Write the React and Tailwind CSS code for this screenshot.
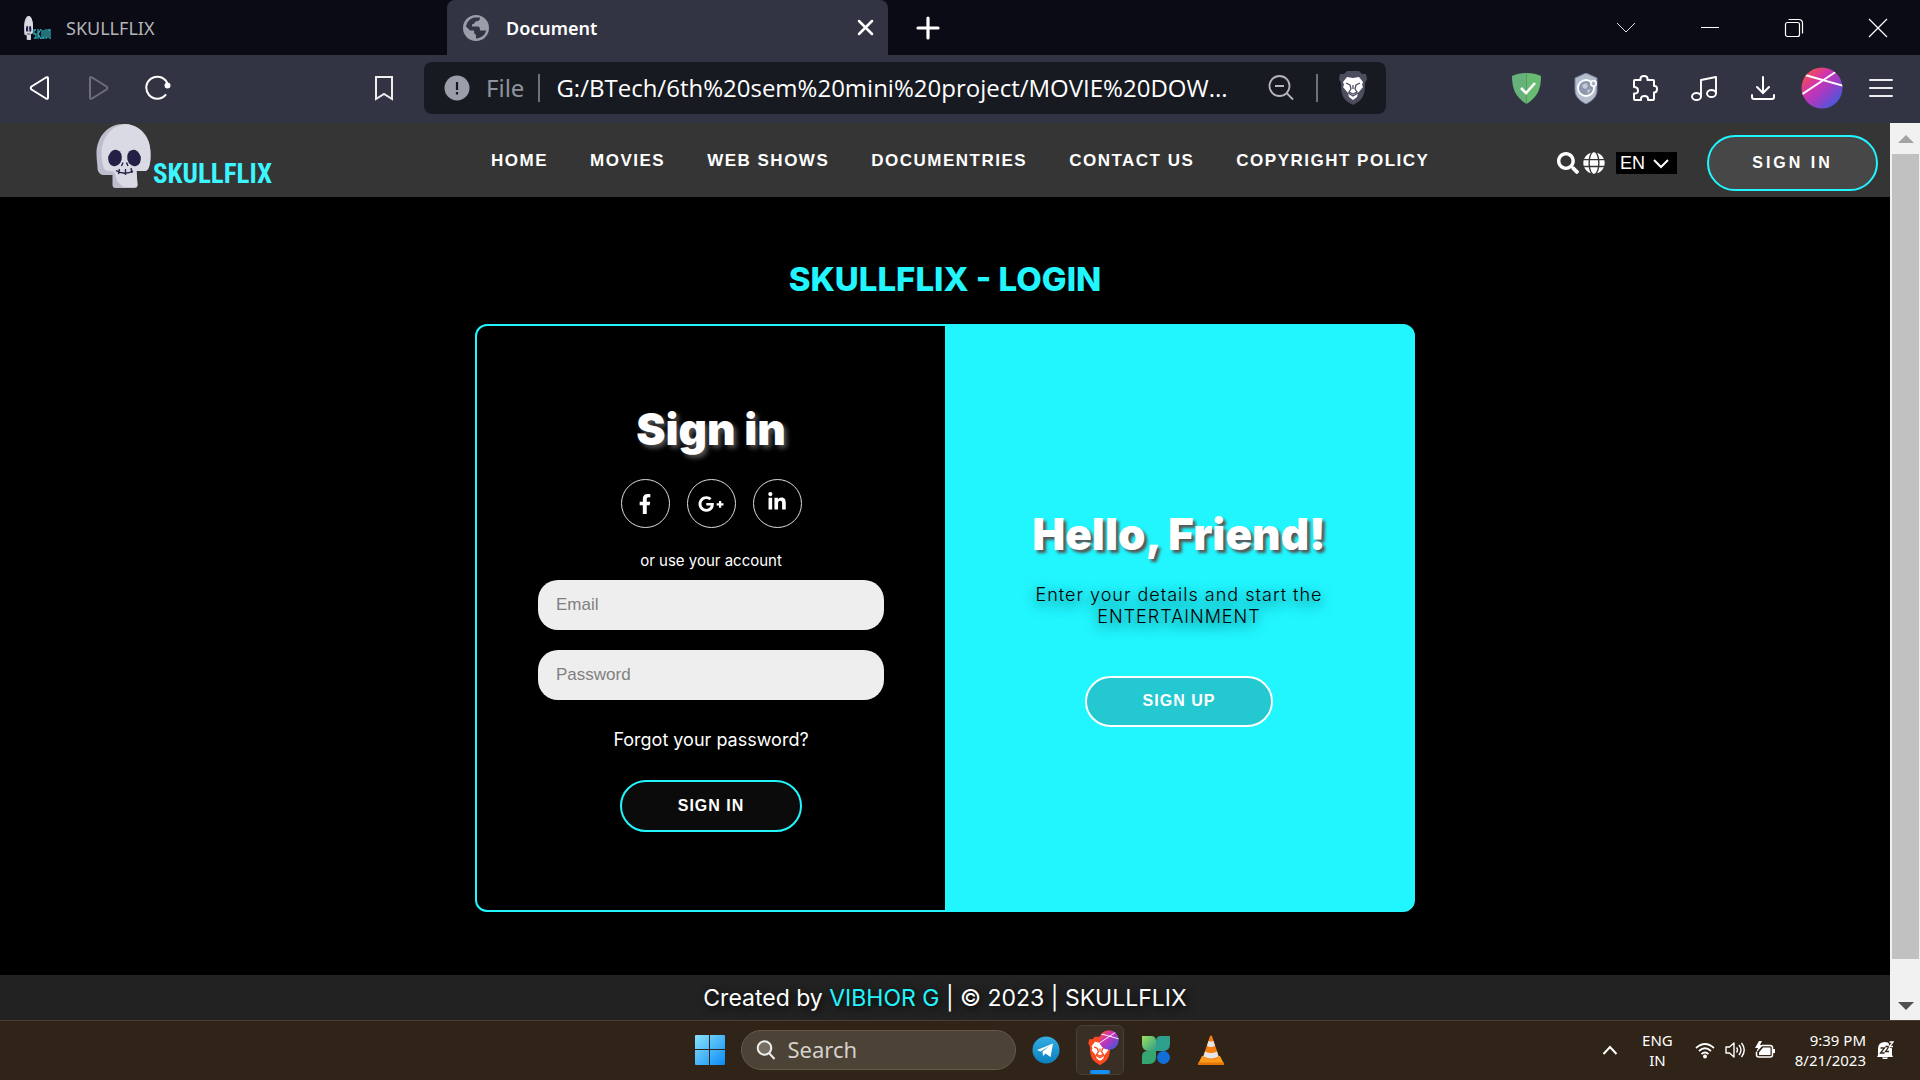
import React from "react";
import { FaSearch, FaGlobe, FaFacebookF, FaGooglePlusG, FaLinkedinIn } from "react-icons/fa";

const ui = "font-['Noto_Sans',sans-serif]";
const arial = "font-['Liberation_Sans',Arial,sans-serif]";

function Skull({ className, stretch }) {
  return (
    <svg className={className} viewBox="0 0 54 64" preserveAspectRatio={stretch ? "none" : undefined} aria-hidden="true">
      <path d="M27 0C11 0 0 13 0 30c0 6 1 10 1 15 1 4 3 6 7 6h8v10c0 2 1 3 3 3h19c2 0 3-1 3-3l-1-14h7c4 0 5-2 6-6 1-4 1-7 1-12C54 12 43 0 27 0Z" fill="#bdbdcd" />
      <path d="M29 0C14 2 5 14 5 30c0 6 1 9 2 13 1 3 3 4 6 4 3 0 5 1 6 4 1 6 4 9 8 12h11c2 0 3-1 3-2l-1-14h7c4 0 5-2 6-6 1-4 1-7 1-12C54 13 44 1 29 0Z" fill="#dadae4" />
      <ellipse cx="18.500" cy="34" rx="6.800" ry="8.300" transform="rotate(14 18.500 34)" fill="#232045" />
      <ellipse cx="37.500" cy="34" rx="6.800" ry="8.300" transform="rotate(-14 37.500 34)" fill="#232045" />
      <path d="m26.500 38.500-1.500 3.500M30 38.500l1.500 3.500M19.500 46.500c5 3.500 12 3.500 17 .500M23 45l-1 5M29 45v6M34.500 44l1 5" stroke="#232045" strokeWidth="1.400" fill="none" />
    </svg>
  );
}

function Avatar({ className }) {
  return (
    <svg className={className} viewBox="0 0 42 42" aria-hidden="true">
      <defs>
        <linearGradient id="orb" x1="0.1" y1="0.1" x2="0.9" y2="0.9">
          <stop offset="0" stopColor="#f7504a" />
          <stop offset="0.350" stopColor="#cf34b0" />
          <stop offset="0.600" stopColor="#a03cc4" />
          <stop offset="1" stopColor="#3f5be0" />
        </linearGradient>
        <clipPath id="orbclip"><circle cx="21" cy="21" r="20.500" /></clipPath>
      </defs>
      <circle cx="21" cy="21" r="20.500" fill="url(#orb)" />
      <path d="M4 8l39 11M0 28 36 4" stroke="#fff" strokeWidth="2" clipPath="url(#orbclip)" />
    </svg>
  );
}

function TabStrip() {
  const control = "grid h-full w-[84px] place-items-center";
  return (
    <div className="flex h-[55px] bg-[#0b0b15] text-white">
      <button className="flex w-[447px] items-center gap-[14px] pl-6 text-left text-[#b5b5b8]">
        <span className="flex w-7 items-end">
          <Skull className="h-6 w-[9px]" stretch />
          <svg className="h-3 w-[18px]" viewBox="0 0 18 12" aria-hidden="true">
            <path d="M3 2H1v4h2v4H1M5 1v10M8 1 5 6l3 5M9 2v8h2V2M13 1v9h1M15 10V2h2M17 1v10" stroke="#2fa9b4" strokeWidth="1.300" fill="none" />
          </svg>
        </span>
        <span className="text-lg">SKULLFLIX</span>
      </button>
      <div className="flex w-[441px] items-center rounded-t-lg bg-[#323443] pl-4 pr-[14px]">
        <svg className="size-[26px]" viewBox="0 0 26 26" aria-hidden="true">
          <circle cx="13" cy="13" r="13" fill="#9b9ea8" />
          <path d="M3 13c0-5 3-9 8-10.500h6c0 3-2 4-5 4 0 2-1 2.500-3 3v2h5c3 0 3 2 3 4h6c-.500 4-4 7.500-10 8v-4c-2 0-2-2-2-4H7l-4-4Z" fill="#323443" />
          <path d="M3 12.500 8.500 17c0 3 2 3 2 6C6 22 3 18 3 12.500Z" fill="#9b9ea8" />
        </svg>
        <span className="ml-[17px] flex-1 text-lg font-semibold">Document</span>
        <button aria-label="Close tab">
          <svg className="size-[17px]" viewBox="0 0 17 17"><path d="m2 2 13 13M15 2 2 15" stroke="#fff" strokeWidth="2.500" strokeLinecap="round" /></svg>
        </button>
      </div>
      <button aria-label="New tab" className="ml-7">
        <svg className="size-6" viewBox="0 0 24 24"><path d="M12 2v20M2 12h20" stroke="#fff" strokeWidth="3.200" strokeLinecap="round" /></svg>
      </button>
      <div className="ml-auto flex">
        <button aria-label="Search tabs" className={control}><svg className="size-5" viewBox="0 0 20 20" fill="none" stroke="#ddd"><path d="m1 5 9 9 9-9" /></svg></button>
        <button aria-label="Minimize" className={control}><svg className="size-5" viewBox="0 0 20 20" fill="none" stroke="#fff"><path d="M1 9.500h18" /></svg></button>
        <button aria-label="Restore" className={control}>
          <svg className="size-5" viewBox="0 0 20 20" fill="none" stroke="#fff" strokeWidth="1.200"><rect x="1.500" y="4.500" width="14" height="14" rx="2" /><path d="M4.500 1.500H15a3.500 3.500 0 0 1 3.500 3.500v10.500" /></svg>
        </button>
        <button aria-label="Close" className={control}><svg className="size-5" viewBox="0 0 20 20" fill="none" stroke="#fff" strokeWidth="1.200"><path d="m1 1 18 18M19 1 1 19" /></svg></button>
      </div>
    </div>
  );
}

function Toolbar() {
  return (
    <div className="flex h-[68px] items-center bg-[#323443] pb-0.5 text-white">
      <div className="flex w-[424px] items-center pl-7">
        <button aria-label="Back"><svg className="size-6" viewBox="0 0 24 24" fill="none" stroke="#fff" strokeWidth="2" strokeLinejoin="round"><path d="M20 2.500v19q0 2-2 1L3.500 13.500q-1.500-1.500 0-3L18 1.500q2-1 2 1Z" /></svg></button>
        <button aria-label="Forward" className="ml-[34px]"><svg className="size-6" viewBox="0 0 24 24" fill="none" stroke="#6d6e79" strokeWidth="2" strokeLinejoin="round"><path d="M4 2.500v19q0 2 2 1l14.500-9q1.500-1.500 0-3L6 1.500q-2-1-2 1Z" /></svg></button>
        <button aria-label="Reload" className="ml-[35px]">
          <svg className="size-[26px]" viewBox="0 0 26 26" fill="none" stroke="#fff" strokeWidth="2"><path d="M22 7.500A11 11 0 1 0 20.500 20" strokeLinecap="round" /><circle cx="22.500" cy="10.500" r="2" fill="#fff" /></svg>
        </button>
        <button aria-label="Bookmark" className="ml-auto mr-[30px]"><svg className="h-[26px] w-5" viewBox="0 0 20 26" fill="none" stroke="#eee" strokeWidth="2"><path d="M2 2h16v22l-8-5-8 5Z" /></svg></button>
      </div>
      <div className="flex h-[52px] flex-1 items-center rounded-lg bg-[#181a21] pl-5 pr-[18px]">
        <svg className="size-[26px]" viewBox="0 0 26 26" aria-hidden="true"><circle cx="13" cy="13" r="12.500" fill="#9b9ea8" /><path d="M13 7v8M13 17v2.500" stroke="#181a21" strokeWidth="2.200" /></svg>
        <span className="ml-4 text-2xl text-[#8f929b]">File</span>
        <span className="ml-[14px] h-7 w-0.5 bg-[#6f7179]" />
        <input aria-label="Address" readOnly value="G:/BTech/6th%20sem%20mini%20project/MOVIE%20DOW..." className="ml-4 min-w-0 flex-1 bg-transparent font-['Open_Sans',sans-serif] text-2xl text-white outline-none" />
        <button aria-label="Zoom" className="ml-6"><svg className="size-[26px]" viewBox="0 0 26 26" fill="none" stroke="#b4b5b9" strokeWidth="1.800"><circle cx="11.500" cy="11" r="10" /><path d="m18.500 18 6.500 6.500M7 11h9" /></svg></button>
        <span className="ml-[22px] h-7 w-0.5 bg-[#6f7179]" />
        <button aria-label="Brave Shields" className="ml-5">
          <svg className="h-9 w-[30px]" viewBox="0 0 30 36"><path d="m9 1h12l3 3 4 0 1 5-2 4c0 14-3 17-12 22C6 30 3 27 3 13L1 9l1-5h4Z" fill="#4c4e5e" /><path d="m9 7 6 1 6-1 4 5-1 3 1 2-5 6-1 4-4 3-4-3-1-4-5-6 1-2-1-3Z" fill="#fff" /><path d="m8 13 4 2 1 4-2 3 4 2 4-2-2-3 1-4 4-2M15 15v4M10 23l5 3 5-3" fill="none" stroke="#4c4e5e" strokeWidth="1.300" /></svg>
        </button>
      </div>
      <div className="grid w-[534px] grid-cols-7 items-center justify-items-center pl-[111px] pr-[10px]">
        <button aria-label="AdGuard"><svg className="size-[31px]" viewBox="0 0 31 31"><path d="M15.500 0C10 0 5 1 1 3c0 12 3 21 14.500 28Z" fill="#67b279" /><path d="M15.500 0C21 0 26 1 30 3c0 12-3 21-14.500 28Z" fill="#68bc71" /><path d="m10 15 5 5L24 10" stroke="#fff" strokeWidth="2.600" fill="none" /></svg></button>
        <button aria-label="Privacy extension"><svg className="h-[31px] w-6" viewBox="0 0 24 31"><path d="M12 0 1 5v12c0 7 5 11 11 14 6-3 11-7 11-14V5Z" fill="#b6bdcd" stroke="#74809d" /><circle cx="12" cy="15" r="8" fill="#8d97ad" stroke="#fff" strokeWidth="1.800" /><path d="m8 12 4-2 2 3-2 3-3-1ZM13 17l4-1-3 5Z" fill="#c4cad6" /><circle cx="19.500" cy="10.500" r="2.700" fill="#a9b1c2" stroke="#fff" strokeWidth="1.500" /></svg></button>
        <button aria-label="Extensions"><svg className="size-[26px]" viewBox="0 0 26 26" fill="none" stroke="#fff" strokeWidth="2" strokeLinejoin="round"><path d="M3 5h5.500q-.500-4 3.500-4t3.500 4H21q1 0 1 1v5q3-.500 3 3t-3 3.500V24q0 1-1 1h-5q.500-4-3.500-4T9 25H3q-1 0-1-1v-5.500q4 .500 4-3T2 12V6q0-1 1-1Z" /></svg></button>
        <button aria-label="Playlist"><svg className="size-[26px]" viewBox="0 0 26 26" fill="none" stroke="#fff" strokeWidth="1.900" strokeLinejoin="round"><ellipse cx="5.500" cy="21.500" rx="4.500" ry="3.500" /><ellipse cx="20.500" cy="18.500" rx="4.500" ry="3.500" /><path d="M10 21.500V5l15-3v16.500" /></svg></button>
        <button aria-label="Downloads"><svg className="size-[26px]" viewBox="0 0 26 26" fill="none" stroke="#fff" strokeWidth="2" strokeLinecap="round"><path d="M13 2v15M7 12l6 6 6-6M2 20v2q0 2 2 2h18q2 0 2-2v-2" /></svg></button>
        <button aria-label="Profile"><Avatar className="size-[42px]" /></button>
        <button aria-label="Menu"><svg className="h-[22px] w-[26px]" viewBox="0 0 26 22" stroke="#eee" strokeWidth="2" strokeLinecap="round"><path d="M2 3h22M2 11h22M2 19h22" /></svg></button>
      </div>
    </div>
  );
}

const links = ["HOME", "MOVIES", "WEB SHOWS", "DOCUMENTRIES", "CONTACT US", "COPYRIGHT POLICY"];

function SiteHeader() {
  return (
    <header className={`flex h-[74px] items-center bg-[#353535] pl-24 pr-3 text-white ${arial}`}>
      <a href="#" className="flex h-full w-[395px] items-end gap-0.5 pb-[9px]">
        <Skull className="h-16 w-[55px]" />
        <span className="font-['Liberation_Sans_Narrow','Roboto_Condensed','Liberation_Sans',sans-serif] text-[27px] leading-7 font-bold text-[#3df5ff]">SKULLFLIX</span>
      </a>
      <nav className="flex gap-[42px] pt-0.5 text-[17px] font-bold tracking-[1.5px] whitespace-nowrap">
        {links.map((label) => <a key={label} href="#">{label}</a>)}
      </nav>
      <div className="ml-auto flex items-center pt-1.5">
        <button aria-label="Search"><FaSearch className="size-[22px]" /></button>
        <FaGlobe className="ml-1 size-[22px]" />
        <div className="relative ml-[11px]">
          <select aria-label="Language" defaultValue="EN" className="block h-[22px] w-[61px] appearance-none bg-black pl-1 text-lg leading-[22px] text-white">
            <option>EN</option>
          </select>
          <svg className="pointer-events-none absolute top-1.5 right-2 h-3 w-4" viewBox="0 0 16 12" fill="none" stroke="#fff" strokeWidth="2"><path d="m1 2 7 7 7-7" /></svg>
        </div>
        <button className="ml-[30px] h-14 w-[171px] rounded-[28px] border-2 border-[#21f6ff] bg-[#474747] text-base font-bold tracking-[3px]">SIGN IN</button>
      </div>
    </header>
  );
}

function LoginCard() {
  const social = "grid size-[49px] place-items-center rounded-full border border-[#ddd]";
  const field = `h-[50px] w-full rounded-[20px] bg-[#eee] px-[18px] text-[17px] text-black placeholder:text-[#808080] ${arial}`;
  const pill = `rounded-[26px] border-2 text-base font-bold tracking-[1px] text-white ${arial}`;
  return (
    <section className="grid w-[940px] max-w-full grid-cols-2 rounded-xl border-2 border-[#21f6ff] bg-[#21f6ff] text-center">
      <form className="flex flex-col items-center rounded-l-[10px] bg-black px-[61px] pt-[75px] pb-[78px]" onSubmit={(e) => e.preventDefault()}>
        <h2 className="text-[44px] leading-[56px] font-black text-shadow-[3px_3px_5px_#555]">Sign in</h2>
        <div className="mt-[22px] flex gap-[17px]">
          <a href="#" aria-label="Facebook" className={social}><FaFacebookF className="size-5" /></a>
          <a href="#" aria-label="Google Plus" className={social}><FaGooglePlusG className="size-[26px]" /></a>
          <a href="#" aria-label="LinkedIn" className={social}><FaLinkedinIn className="mb-1 size-5" /></a>
        </div>
        <p className="mt-[23px] text-[15px] leading-5">or use your account</p>
        <input type="email" aria-label="Email" placeholder="Email" className={`mt-[9px] ${field}`} />
        <input type="password" aria-label="Password" placeholder="Password" className={`mt-5 ${field}`} />
        <a href="#" className="mt-7 text-lg leading-6">Forgot your password?</a>
        <button className={`mt-7 h-[52px] w-[182px] border-[#21f6ff] bg-[#0b0b0b] ${pill}`}>SIGN IN</button>
      </form>
      <div className="flex flex-col items-center justify-center px-16 pb-1">
        <h2 className="text-[44px] leading-[56px] font-black whitespace-nowrap text-shadow-[3px_3px_3px_#555]">Hello, Friend!</h2>
        <p className="mt-[22px] text-lg leading-[22px] font-light tracking-[1px] whitespace-nowrap text-black text-shadow-[0_4px_14px_rgb(0_0_0/0.8)]">
          Enter your details and start the<br />ENTERTAINMENT
        </p>
        <button className={`mt-12 h-[51px] w-[188px] border-white bg-[#24c8d1] ${pill}`}>SIGN UP</button>
      </div>
    </section>
  );
}

function Scrollbar() {
  return (
    <div className="flex w-[30px] flex-col items-center bg-[#f1f1f1] pl-0.5 pr-px" aria-hidden="true">
      <svg className="mt-3 h-2 w-4" viewBox="0 0 16 8"><path d="M0 8 8 0l8 8Z" fill="#a3a3a3" /></svg>
      <div className="mt-[11px] mb-[43px] w-full flex-1 bg-[#c1c1c1]" />
      <svg className="mb-2.5 h-2 w-4" viewBox="0 0 16 8"><path d="m0 0 8 8 8-8Z" fill="#505050" /></svg>
    </div>
  );
}

function Taskbar() {
  return (
    <footer className="grid h-[60px] grid-cols-[1fr_auto_1fr] items-center border-t border-[#4a3f33] bg-[#2f2417] pb-0.5 text-white">
      <span />
      <div className="flex items-center">
        <button aria-label="Start">
          <svg className="size-[30px]" viewBox="0 0 30 30">
            <defs><linearGradient id="win" x1="0" y1="0" x2="1" y2="1"><stop offset="0" stopColor="#8be2fb" /><stop offset="1" stopColor="#0a8cf5" /></linearGradient></defs>
            <path d="M0 1q0-1 1-1h13v14H0ZM15 0h14q1 0 1 1v13H15ZM0 15h14v15H1q-1 0-1-1ZM15 15h15v14q0 1-1 1H15Z" fill="url(#win)" />
          </svg>
        </button>
        <label className="ml-4 flex h-10 w-[275px] items-center rounded-full border border-[#65594b] bg-[#4c4236] pl-[14px]">
          <svg className="size-5" viewBox="0 0 20 20" fill="#776e63" stroke="#eee" strokeWidth="2"><circle cx="8.500" cy="8" r="6.800" /><path d="m13 13 5.500 6" /></svg>
          <input aria-label="Search" placeholder="Search" className="ml-3 w-48 bg-transparent text-[22px] outline-none placeholder:text-[#d5d1cc]" />
        </label>
        <button aria-label="Telegram" className="ml-4">
          <svg className="size-7" viewBox="0 0 28 28">
            <defs><linearGradient id="tg" x1="0" y1="0" x2="0" y2="1"><stop offset="0" stopColor="#33aee3" /><stop offset="1" stopColor="#0a80bd" /></linearGradient></defs>
            <circle cx="14" cy="14" r="13.500" fill="url(#tg)" /><path d="M5 14 21 7.500l-2.500 13.500-5-3.500-2.500 2.500-.500-4.500 7-5.500-9 5.500Z" fill="#fff" />
          </svg>
        </button>
        <button aria-label="Brave" className="relative ml-4 flex h-[50px] w-12 justify-center rounded-md border border-[#4a3f34] bg-[#3a2f24] pt-2.5">
          <svg className="h-[30px] w-[26px]" viewBox="0 0 30 36">
            <path d="m9 1h12l3 3h4l1 5-2 4c0 14-3 17-12 22C6 30 3 27 3 13L1 9l1-5h4Z" fill="#fb4a1d" /><path d="m9 7 6 1 6-1 4 5-1 3 1 2-5 6-1 4-4 3-4-3-1-4-5-6 1-2-1-3Z" fill="#fff" /><path d="m8 13 4 2 1 4-2 3 4 2 4-2-2-3 1-4 4-2M15 15v4M10 23l5 3 5-3" fill="none" stroke="#fb4a1d" strokeWidth="1.500" />
          </svg>
          <Avatar className="absolute top-1 right-1 size-5" />
          <span className="absolute bottom-0 h-1 w-5 rounded-full bg-[#1590f5]" />
        </button>
        <button aria-label="Photos" className="ml-[18px]">
          <svg className="size-7" viewBox="0 0 28 28">
            <defs><linearGradient id="leaf" x1="0" y1="0" x2="1" y2="1"><stop offset="0" stopColor="#9be05f" /><stop offset="1" stopColor="#2e9c85" /></linearGradient></defs>
            <path d="M28 0h-9q-5 0-5 5v10h7q7 0 7-7Z" fill="#2d9f8c" /><path d="M0 28V20q0-5 6-5h8v6q0 7-7 7Z" fill="#36a671" /><path d="M0 0h9q5 0 5 5v10H7q-7 0-7-7Z" fill="url(#leaf)" /><circle cx="21.500" cy="21.500" r="6.500" fill="#126fd8" />
          </svg>
        </button>
        <button aria-label="VLC" className="mr-0.5 ml-7">
          <svg className="h-[30px] w-[26px]" viewBox="0 0 26 30">
            <path d="M4 21h18l4 8H0Z" fill="#fb9a1b" /><path d="M0 27.500h26V30H0Z" fill="#e87405" /><path d="M12 1q1-1 2 0l7 21q-8 5-16 0Z" fill="#f57f12" /><path d="m10.500 6-1.500 5q4 2 8 0l-1.500-5q-2.500 1-5 0ZM7 16.500l-1.500 5q7.500 4 15 0l-1.500-5q-6 3-12 0Z" fill="#e6e6e6" />
          </svg>
        </button>
      </div>
      <div className="flex items-center justify-end pr-[26px] text-[15px] leading-5">
        <button aria-label="Hidden icons"><svg className="h-3 w-4" viewBox="0 0 16 12" fill="none" stroke="#fff" strokeWidth="2"><path d="m1.500 10 6.500-7 6.500 7" /></svg></button>
        <span className="ml-6 text-center">ENG<br />IN</span>
        <button aria-label="Network" className="ml-[22px]"><svg className="size-5" viewBox="0 0 20 20" fill="none" stroke="#fff" strokeWidth="1.700"><path d="M1 8q9-8 18 0M4 11q6-5.500 12 0M6.500 14q3.500-3 7 0" /><circle cx="10" cy="16.500" r="2" fill="#fff" stroke="none" /></svg></button>
        <button aria-label="Volume" className="ml-2.5"><svg className="size-5" viewBox="0 0 20 20" fill="none" stroke="#fff" strokeWidth="1.400" strokeLinejoin="round"><path d="M1 7h3.500L9 3v14l-4.500-4H1ZM11.500 7.500q2 2.500 0 5M14 5q4 5 0 10M16.500 3q5.500 7 0 14" /></svg></button>
        <button aria-label="Battery" className="ml-2.5"><svg className="size-5" viewBox="0 0 20 20"><path d="M7 5.500h8q2.500 0 2.500 2V15q0 2-2.500 2H4q-2.500 0-2.500-2v-3" fill="none" stroke="#fff" strokeWidth="1.500" /><path d="M8 7.500h7.500v7.500H4v-2.500ZM18 9h2v4h-2ZM4 1 0 8h3l-2 5 7-8H5l2-4Z" fill="#fff" /></svg></button>
        <span className="ml-5 text-right">9:39 PM<br />8/21/2023</span>
        <button aria-label="Notifications" className="ml-2.5"><svg className="size-[18px]" viewBox="0 0 18 18"><path d="M2 14V8q0-7 7-7 6 0 7 7v6l1 2H1ZM6 16.500h6q-1 2-3 2t-3-2Z" fill="#fff" /><path d="M4.500 7h4l-4 5h4M9.500 5.500h3.500l-3.500 5H13" stroke="#2f2417" strokeWidth="1.300" fill="none" /><path d="M12 0h6v7h-4Z" fill="#2f2417" /><path d="M13.500 1h3.500l-3.500 4.500H17" stroke="#fff" strokeWidth="1.300" fill="none" /></svg></button>
      </div>
    </footer>
  );
}

export default function App() {
  return (
    <div className={`flex min-h-screen flex-col bg-black ${ui}`}>
      <TabStrip />
      <Toolbar />
      <div className="flex flex-1">
        <div className="flex min-w-0 flex-1 flex-col bg-black font-['Inter',sans-serif] text-white">
          <SiteHeader />
          <main className="flex flex-1 flex-col items-center justify-center pb-0.5">
            <h1 className="mb-6 text-[33px] leading-[42px] font-extrabold text-[#21f6ff]">SKULLFLIX - LOGIN</h1>
            <LoginCard />
          </main>
          <div className="flex h-[45px] items-center justify-center bg-[#222] text-[23px] text-shadow-[2px_2px_8px_#000]">
            <p className="pt-0.5">Created by <a href="#" className="text-[#21f6ff]">VIBHOR G</a> | © 2023 | SKULLFLIX</p>
          </div>
        </div>
        <Scrollbar />
      </div>
      <Taskbar />
    </div>
  );
}
